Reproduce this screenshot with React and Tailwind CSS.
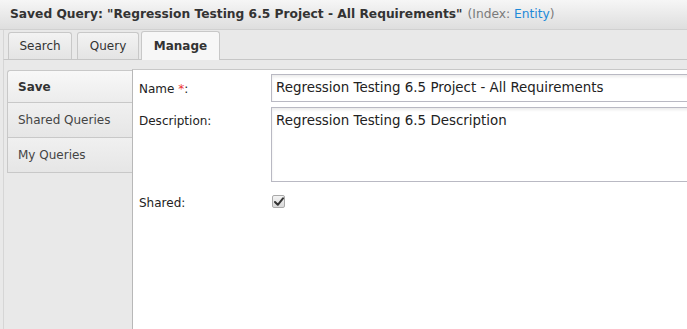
import React from "react";

export default function App() {
  return (
    <div
      className="w-[687px] h-[329px] overflow-hidden bg-[#e9e9e9] text-[#222] flex flex-col"
      style={{ fontFamily: '"DejaVu Sans", Verdana, sans-serif' }}
    >
      {/* title bar */}
      <div className="h-[30px] shrink-0 flex items-center pl-[10px] bg-gradient-to-b from-[#f6f6f6] to-[#dedede] border-b border-[#d0d0d0] text-[12.25px] whitespace-nowrap">
        <span className="font-bold text-[#333]">
          Saved Query: "Regression Testing 6.5 Project - All Requirements"
        </span>
        <span className="ml-[5px] text-[#7a7a7a]">
          (Index: <span className="text-[#1e8ad8]">Entity</span>)
        </span>
      </div>

      {/* tab strip */}
      <div className="h-[30px] shrink-0 flex items-end pl-[4px] border-b border-[#c6c6c6] ml-[3px] border-l border-l-[#d6d6d6] -mb-px relative z-10">
        <div className="h-[27px] w-[64px] flex items-center justify-center rounded-t-[3px] border border-b-0 border-[#c8c8c8] bg-gradient-to-b from-[#f3f3f3] to-[#e4e4e4] text-[12px] text-[#333]">
          Search
        </div>
        <div className="h-[27px] w-[62px] ml-[5px] flex items-center justify-center rounded-t-[3px] border border-b-0 border-[#c8c8c8] bg-gradient-to-b from-[#f3f3f3] to-[#e4e4e4] text-[12px] text-[#333]">
          Query
        </div>
        <div className="h-[29px] w-[79px] ml-[2px] -mb-px flex items-center justify-center rounded-t-[3px] border border-b-0 border-[#c8c8c8] bg-[#f7f7f7] text-[12px] font-bold text-[#333]">
          Manage
        </div>
      </div>

      {/* body */}
      <div className="flex-1 flex ml-[3px] border-l border-[#d6d6d6] pt-[10px]">
        {/* sidebar */}
        <div className="w-[128px] shrink-0 flex flex-col pl-[3px] border-t border-transparent">
          <div className="h-[33px] flex items-center pl-[10px] rounded-tl-[3px] border border-r-0 border-[#c8c8c8] bg-gradient-to-b from-[#f8f8f8] to-[#ececec] text-[12px] font-bold text-[#333]">
            Save
          </div>
          <div className="h-[35px] flex items-center pl-[10px] border border-t-0 border-r-0 border-[#c8c8c8] bg-gradient-to-b from-[#f0f0f0] to-[#e6e6e6] text-[12px] text-[#444]">
            Shared Queries
          </div>
          <div className="h-[35px] flex items-center pl-[10px] border border-t-0 border-r-0 border-[#c8c8c8] bg-gradient-to-b from-[#f0f0f0] to-[#e6e6e6] text-[12px] text-[#444]">
            My Queries
          </div>
        </div>

        {/* content */}
        <div className="flex-1 min-w-0 overflow-hidden bg-white border-l border-t border-l-[#b8b8b8] border-t-[#c8c8c8] pl-[6px] pt-[4px] text-[12px] text-[#222]">
          <div className="flex">
            <div className="w-[132px] shrink-0 pt-[6px]">
              Name <span className="text-[#e33]">*</span>:
            </div>
            <div className="w-[440px] shrink-0 h-[28px] border border-[#b9b9c3] shadow-[inset_0_2px_3px_rgba(0,0,0,0.08)] flex items-center pl-[4px] text-[13.4px] whitespace-nowrap overflow-hidden">
              Regression Testing 6.5 Project - All Requirements
            </div>
          </div>
          <div className="flex mt-[5px]">
            <div className="w-[132px] shrink-0 pt-[5px]">Description:</div>
            <div className="w-[440px] shrink-0 h-[75px] border border-[#b9b9c3] shadow-[inset_0_2px_3px_rgba(0,0,0,0.08)] pl-[4px] pt-[3px] text-[13.4px] whitespace-nowrap overflow-hidden">
              Regression Testing 6.5 Description
            </div>
          </div>
          <div className="flex mt-[12px]">
            <div className="w-[133px] shrink-0">Shared:</div>
            <div className="w-[13px] h-[13px] mt-[1px] rounded-[2px] border border-[#a9a9a9] bg-gradient-to-b from-[#f4f4f4] to-[#d8d8d8] flex items-center justify-center">
              <svg width="10" height="9" viewBox="0 0 10 9">
                <path d="M1 5 L3.8 7.8 L9 1.3" stroke="#333" strokeWidth="2" fill="none" strokeLinecap="round" strokeLinejoin="round" />
              </svg>
            </div>
          </div>
        </div>
      </div>
    </div>
  );
}
